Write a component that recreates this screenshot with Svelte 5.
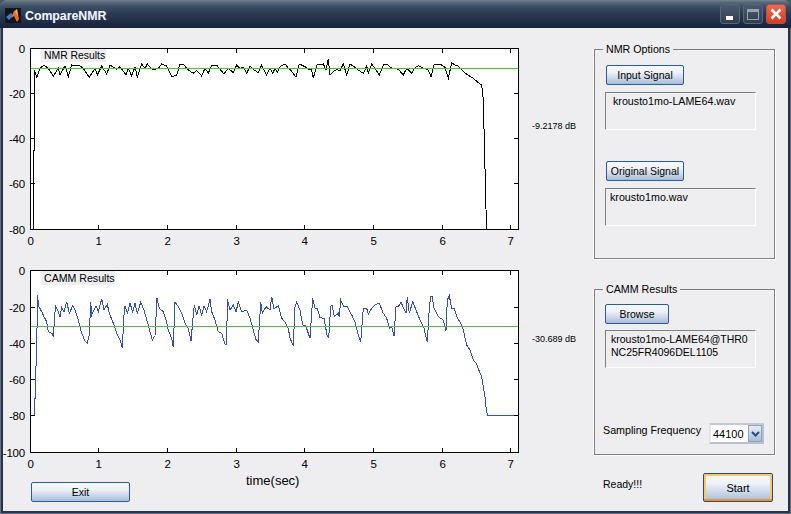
<script>
  // trace points were read off 3x crops, so each run is offset + x/3, y/3
  function run(ox, oy, pts) {
    const out = []
    for (let i = 0; i < pts.length; i += 2) {
      out.push(`${(ox + pts[i] / 3).toFixed(1)},${(oy + pts[i + 1] / 3).toFixed(1)}`)
    }
    return out
  }

  const nmrTrace = [
    '33.5,229', '33.5,150', '34.5,150', '34.5,70',
    ...run(20, 40, [50,112, 60,85, 72,75, 85,85, 100,108, 115,85, 120,105, 135,77, 145,110, 155,75, 180,78, 190,85,
      208,112, 225,85, 232,105, 245,78, 260,102, 270,75, 290,88, 300,80, 318,105, 325,85, 335,108, 345,80, 352,112,
      365,72, 375,85, 382,72, 400,90, 415,85, 425,72, 440,78, 455,110, 470,105, 480,72, 492,75, 505,90, 520,100,
      530,92, 545,108, 555,85, 565,100, 575,75, 590,75, 600,88, 612,102, 625,85, 640,98, 650,75, 660,85, 670,82,
      680,100, 690,78, 700,88, 715,98, 725,75, 740,105, 750,85]),
    ...run(270, 40, [8,100, 15,85, 22,98, 32,78, 45,72, 55,85, 62,90, 78,112, 88,72, 105,80, 115,88, 125,90, 130,115,
      140,75, 160,72, 168,90, 175,57, 180,105, 190,95, 200,88, 210,92, 220,72, 230,105, 240,72, 255,82, 265,90,
      280,100, 290,78, 295,100, 305,72, 318,90, 328,105, 340,75, 350,72, 365,85, 375,85, 385,88, 400,105, 410,85,
      425,100, 433,85, 445,77, 462,85, 475,90, 483,110, 493,72, 510,72, 525,82, 535,115, 545,68, 555,75, 565,78,
      578,92, 590,103, 610,115, 625,128, 635,135, 640,180]),
    '486.5,229'
  ].join(' ')

  const cammTrace = [
    '31,415', '34.3,415', '34.3,398', '35.7,398', '35.7,367', '36.7,365',
    ...run(20, 265, [52,90, 57,125, 65,140, 72,155, 80,170, 85,200, 98,207, 100,217, 104,150, 107,125, 115,140, 120,155,
      125,128, 132,140, 140,110, 148,145, 158,122, 165,135, 175,165, 185,205, 195,228, 202,235, 208,210, 212,112,
      215,150, 222,135, 228,122, 235,140, 245,102, 252,135, 262,118, 268,145, 280,175, 290,205, 302,230, 307,250,
      312,150, 315,122, 322,145, 330,115, 338,140, 345,115, 352,145, 362,112, 372,135, 382,170, 390,200, 397,225,
      405,212, 411,100, 418,130, 430,140, 438,165, 445,195, 455,220, 460,247, 465,112, 475,125, 485,145, 495,175,
      505,190, 513,228, 520,150, 523,120, 530,150, 537,122, 545,150, 552,122, 560,140, 570,102, 575,140, 585,165,
      595,200, 605,205, 615,238, 620,240, 622,102, 630,135, 640,120, 648,140, 655,112, 665,140, 680,135, 690,160,
      700,195, 707,222, 715,232, 722,112, 727,145, 738,125, 750,135]),
    ...run(270, 265, [5,95, 12,132, 25,122, 35,160, 45,172, 55,190, 60,220, 70,242, 75,125, 80,112, 90,135, 98,180,
      107,182, 120,220, 128,100, 135,130, 142,130, 150,158, 162,160, 172,215, 176,218, 182,125, 186,120, 193,155,
      205,145, 208,155, 212,105, 222,125, 232,125, 245,150, 255,170, 262,200, 272,232, 280,130, 290,130, 295,148,
      305,130, 318,118, 328,115, 340,145, 350,160, 358,190, 365,185, 372,213, 378,125, 385,125, 393,112, 408,145,
      412,95, 418,145, 428,110, 440,140, 450,165, 462,190, 472,232, 478,130, 482,95, 487,95, 492,130, 505,155,
      520,165, 528,198, 532,105, 538,92, 545,130, 553,130, 560,155, 572,175, 580,195, 590,240, 600,255, 610,285, 620,297]),
    ...run(430, 280, [150,280, 155,290, 160,320, 165,350, 168,380, 172,405, 265,405])
  ].join(' ')

  const xTicks = [
    [0, 30], [1, 98], [2, 167], [3, 236], [4, 304], [5, 373], [6, 442], [7, 510]
  ]

  const plots = [
    {
      title: 'NMR Results', top: 48, bottom: 229, view: '3 28 527 222', height: 222,
      trace: nmrTrace, color: '#000', avg: 68, avgColor: '#44cc22',
      label: { x: 41, y: 49, w: 65, h: 13, size: 10.4 },
      yTicks: [[0, 48], [-20, 93], [-40, 138], [-60, 183], [-80, 229]]
    },
    {
      title: 'CAMM Results', top: 270, bottom: 452, view: '3 250 527 222', height: 222,
      trace: cammTrace, color: '#3450b4', avg: 326, avgColor: '#55bb44',
      label: { x: 41, y: 271, w: 74, h: 14, size: 10.6 },
      yTicks: [[0, 270], [-20, 307], [-40, 343], [-60, 379], [-80, 415], [-100, 452]]
    }
  ]
</script>

<div class="window">
  <header class="titlebar">
    <svg class="logo" width="16" height="15" viewBox="0 0 16 15">
      <rect width="16" height="15" fill="#14141c" />
      <polygon points="1,9 6,5 8,7 6,10 4,12" fill="#3f7fd0" />
      <polygon points="6,10 9,3 12,1 14,11 12,14 9,8" fill="#e8721c" />
      <polygon points="10,4 12,1 13,8" fill="#f4b040" />
    </svg>
    <span class="wintitle">CompareNMR</span>
    <div class="winbtns">
      <div class="winbtn"><span class="min"></span></div>
      <div class="winbtn"><span class="max"></span></div>
      <div class="winbtn close">
        <svg width="12" height="12" viewBox="0 0 12 12">
          <path d="M1.5 1.5 L10.5 10.5 M10.5 1.5 L1.5 10.5" stroke="#fff" stroke-width="2.6" />
        </svg>
      </div>
    </div>
  </header>

  <div class="body">
    <div class="charts">
      {#each plots as p}
        <svg class="plot" width="527" height={p.height} viewBox={p.view}>
          <rect x="30" y={p.top} width="488" height={p.bottom - p.top} fill="#fff" />
          <polyline points={p.trace} fill="none" stroke={p.color} shape-rendering="crispEdges" />
          <line x1="31" x2="518" y1={p.avg + 0.5} y2={p.avg + 0.5} stroke={p.avgColor} shape-rendering="crispEdges" />
          <g stroke="#000" shape-rendering="crispEdges">
            <rect x="30.5" y={p.top + 0.5} width="488" height={p.bottom - p.top} fill="none" />
            {#each xTicks as [v, x]}
              <line x1={x + 0.5} x2={x + 0.5} y1={p.top} y2={p.top + 5} />
              <line x1={x + 0.5} x2={x + 0.5} y1={p.bottom - 4} y2={p.bottom + 1} />
            {/each}
            {#each p.yTicks as [v, y]}
              <line x1="30" x2="35" y1={y + 0.5} y2={y + 0.5} />
              <line x1="514" x2="519" y1={y + 0.5} y2={y + 0.5} />
            {/each}
          </g>
          <rect x={p.label.x} y={p.label.y} width={p.label.w} height={p.label.h} fill="#eeedf0" />
          <text class="plot-title" x={p.label.x + 3} y={p.label.y + p.label.h - 3} font-size={p.label.size}>{p.title}</text>
          {#each p.yTicks as [v, y]}
            <text class="tick" x="25" y={y + 4.5} text-anchor="end">{v}</text>
          {/each}
          {#each xTicks as [v, x]}
            <text class="tick" x={x + 0.5} y={p.bottom + 16} text-anchor="middle">{v}</text>
          {/each}
        </svg>
      {/each}
      <div class="chart-foot">
        <button class="btn exit">Exit</button>
        <span class="xlabel">time(sec)</span>
      </div>
    </div>

    <div class="readouts">
      <span class="db first">-9.2178 dB</span>
      <span class="db second">-30.689 dB</span>
    </div>

    <div class="side">
      <fieldset class="group nmr">
        <legend>NMR Options</legend>
        <button class="btn wide">Input Signal</button>
        <div class="filebox indent">krousto1mo-LAME64.wav</div>
        <button class="btn wide second-btn">Original Signal</button>
        <div class="filebox">krousto1mo.wav</div>
      </fieldset>

      <fieldset class="group camm">
        <legend>CAMM Results</legend>
        <button class="btn browse">Browse</button>
        <div class="filebox tight">krousto1mo-LAME64@THR0<br />NC25FR4096DEL1105</div>
        <div class="sampling">
          <span class="samp-label">Sampling Frequency</span>
          <div class="combo">
            <span class="combo-val">44100</span>
            <span class="combo-arrow">
              <svg width="9" height="6" viewBox="0 0 9 6">
                <path d="M1 1 L4.5 4.5 L8 1" fill="none" stroke="#2a4a80" stroke-width="2" />
              </svg>
            </span>
          </div>
        </div>
      </fieldset>

      <div class="status">
        <span>Ready!!!</span>
        <button class="btn start">Start</button>
      </div>
    </div>
  </div>
</div>

<style>
  :global(body) {
    margin: 0;
    background: #4a5666;
  }

  .window {
    box-sizing: border-box;
    width: 791px;
    height: 514px;
    display: flex;
    flex-direction: column;
    border-radius: 7px 7px 0 0;
    overflow: hidden;
    background: #26334a;
    box-shadow: inset 0 0 0 1px #66727f;
    font-family: "Liberation Sans", Arial, sans-serif;
    color: #000;
  }

  .titlebar {
    height: 28px;
    flex: none;
    display: flex;
    align-items: center;
    padding: 3px 5px 0 5px;
    box-sizing: border-box;
    background: linear-gradient(to bottom, #76838f 0, #5b6b7d 2px, #3f5066 6px, #2b3a52 14px, #18233a 28px);
  }

  .logo {
    margin-right: 4px;
  }

  .wintitle {
    color: #f4f6fb;
    font-weight: bold;
    font-size: 12.3px;
    text-shadow: 1px 0 0 #36507a;
  }

  .winbtns {
    margin-left: auto;
    margin-top: -3px;
    display: flex;
    gap: 3px;
  }

  .winbtn {
    box-sizing: border-box;
    width: 20px;
    height: 20px;
    display: flex;
    align-items: center;
    justify-content: center;
    border: 1px solid #56677a;
    border-radius: 3px;
    background: linear-gradient(to bottom, #4b5a6d, #303e52);
    position: relative;
  }

  .min {
    width: 7px;
    height: 4px;
    background: #fff;
    margin-top: 8px;
    margin-left: -2px;
  }

  .max {
    box-sizing: border-box;
    width: 12px;
    height: 11px;
    border: 1px solid #99a3ad;
    border-top-width: 3px;
  }

  .close {
    background: linear-gradient(to bottom, #ee6a50, #d83a24);
    border-color: #a4584e;
  }

  .body {
    flex: 1;
    display: flex;
    margin: 0 3px 3px 3px;
    background: #eeedf0;
    font-size: 10.5px;
  }

  .charts {
    width: 527px;
    flex: none;
    display: flex;
    flex-direction: column;
  }

  .plot {
    display: block;
    flex: none;
  }

  .plot-title {
    font-family: "Liberation Sans", Arial, sans-serif;
  }

  .tick {
    font-family: "Liberation Sans", Arial, sans-serif;
    font-size: 11.5px;
    letter-spacing: -0.2px;
  }

  .chart-foot {
    display: flex;
    align-items: flex-start;
    padding-left: 28px;
  }

  .xlabel {
    font-size: 13px;
    line-height: 15px;
    margin-left: 116px;
    margin-top: 1px;
  }

  .exit {
    width: 99px;
    height: 20px;
    margin-top: 10px;
  }

  .readouts {
    width: 64px;
    flex: none;
    display: flex;
    flex-direction: column;
    padding-left: 2px;
    box-sizing: border-box;
  }

  .db {
    font-size: 9px;
    line-height: 11px;
  }

  .first {
    margin-top: 93px;
  }

  .second {
    margin-top: 202px;
  }

  .side {
    width: 181px;
    flex: none;
    padding-top: 14px;
    display: flex;
    flex-direction: column;
  }

  .group {
    box-sizing: border-box;
    width: 181px;
    margin: 0;
    padding: 9px 0 0 11px;
    border: 1px solid #808080;
    display: flex;
    flex-direction: column;
    align-items: flex-start;
    box-shadow: -1px 1px 0 #fff, 1px 1px 0 #fff;
  }

  .group legend {
    margin-left: -3px;
    padding: 0 3px;
    font-size: 10.7px;
    line-height: 14px;
  }

  .nmr {
    height: 217px;
  }

  .camm {
    height: 173px;
    margin-top: 23px;
    padding-top: 8px;
  }

  .btn {
    box-sizing: border-box;
    padding: 0;
    border: 1px solid #2c5a9c;
    border-radius: 2px;
    background: linear-gradient(to bottom, #f6f8fc 0, #eef2f8 35%, #c4d2e6 75%, #a8bcd8 100%);
    font-family: "Liberation Sans", Arial, sans-serif;
    font-size: 10.5px;
    color: #000;
  }

  .wide {
    width: 78px;
    height: 20px;
  }

  .second-btn {
    margin-top: 31px;
  }

  .browse {
    width: 64px;
    height: 20px;
    margin-left: -1px;
  }

  .filebox {
    box-sizing: border-box;
    width: 151px;
    height: 38px;
    margin: 7px 0 0 -1px;
    padding: 2px 0 0 4px;
    border: 1px solid;
    border-color: #808080 #fff #fff #808080;
    font-size: 10.7px;
    line-height: 13px;
  }

  .indent {
    padding-left: 7px;
  }

  .tight {
    font-size: 10.5px;
    margin-top: 6px;
    padding-left: 5px;
  }

  .sampling {
    display: flex;
    align-items: flex-start;
    margin: 55px 0 0 -3px;
  }

  .samp-label {
    font-size: 10.7px;
    line-height: 14px;
    width: 106px;
  }

  .combo {
    box-sizing: border-box;
    width: 55px;
    height: 21px;
    display: flex;
    border: 2px solid #b8c0cc;
    border-left-color: #e4e6ea;
    border-top-color: #c4c8d0;
    background: #fff;
    align-items: stretch;
  }

  .combo-val {
    flex: 1;
    font-size: 11px;
    line-height: 18px;
    padding-left: 2px;
  }

  .combo-arrow {
    width: 14px;
    display: flex;
    align-items: center;
    justify-content: center;
    background: linear-gradient(to bottom, #e6ecf6, #a8bcd8);
    border: 1px solid #8ea4c4;
    box-sizing: border-box;
  }

  .status {
    display: flex;
    align-items: flex-start;
    justify-content: space-between;
    padding: 21px 2px 0 9px;
  }

  .status span {
    margin-top: 1px;
    line-height: 14px;
  }

  .start {
    width: 70px;
    height: 29px;
    border-color: #2c4a80;
    font-size: 11px;
    box-shadow: inset 0 -2px 0 #ee9426, inset 0 0 0 2px #f4cc66;
    margin-top: -3px;
  }
</style>
